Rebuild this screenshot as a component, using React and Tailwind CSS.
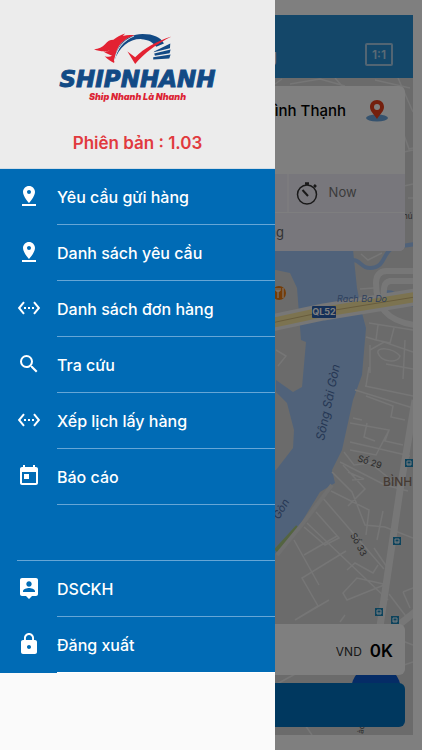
import { MdPinDrop, MdSettingsEthernet, MdSearch, MdLock } from 'react-icons/md';

const TodayIcon = ({ size }) => (
    <svg viewBox="0 0 24 24" width={size} height={size} fill="currentColor" aria-hidden="true">
        <path d="M19 3h-1V1h-2v2H8V1H6v2H5c-1.110 0-1.990.9-1.990 2L3 19c0 1.100.89 2 2 2h14c1.100 0 2-.9 2-2V5c0-1.100-.9-2-2-2zm0 16H5V8h14v11zM7 10h5v5H7z" />
    </svg>
);

const ContactPinIcon = ({ size }) => (
    <svg viewBox="0 0 24 24" width={size} height={size} fill="currentColor" aria-hidden="true">
        <path d="M19 2H5c-1.100 0-2 .9-2 2v14c0 1.100.9 2 2 2h4l3 3 3-3h4c1.100 0 2-.9 2-2V4c0-1.100-.9-2-2-2zm-7 3.300c1.490 0 2.700 1.210 2.700 2.700s-1.210 2.700-2.700 2.700-2.700-1.210-2.700-2.700 1.210-2.700 2.700-2.700zM18 16H6v-.9c0-2 4-3.100 6-3.100s6 1.100 6 3.100v.9z" />
    </svg>
);

const MENU = [
    { label: 'Yêu cầu gửi hàng', icon: MdPinDrop },
    { label: 'Danh sách yêu cầu', icon: MdPinDrop },
    { label: 'Danh sách đơn hàng', icon: MdSettingsEthernet },
    { label: 'Tra cứu', icon: MdSearch },
    { label: 'Xếp lịch lấy hàng', icon: MdSettingsEthernet },
    { label: 'Báo cáo', icon: TodayIcon },
];

const ACCOUNT = [
    { label: 'DSCKH', icon: ContactPinIcon },
    { label: 'Đăng xuất', icon: MdLock },
];

const STOPS = [[409, 463], [397, 541], [379, 612], [395, 620]];

const Logo = () => (
    <div className="flex flex-col items-center">
        <svg viewBox="155 35 275 98" className="mb-0.5 h-[33px] w-[92px]" aria-hidden="true">
            <path d="M221 122C226 84 250 41 306 41C340 41 360 51 370 69L347 79C337 64 322 57 303 56C266 55 238 78 221 122Z" fill="#124a85" />
            <path d="M161 86C175 85 186 80 194 71C202 62 208 58 219 58C228 50 240 43 254 39L247 47C259 43 271 43 282 45C262 50 245 62 235 78C226 93 224 108 221 127C212 123 202 116 193 107C202 110 209 109 215 106C205 102 197 98 189 93C196 94 203 93 208 90C192 95 176 92 161 86Z" fill="#e32232" />
            <path d="M222 121C228 87 246 61 280 47" fill="none" stroke="#ececec" strokeWidth="3" />
            <path d="M261 93L284 130C311 98 348 70 393 48C348 62 311 83 284 110Z" fill="#e32232" />
            <path d="M342 92L389 69L388 83L339 95ZM341 99L390 87L387 98L343 106ZM338 110L390 102L386 114L338 117Z" fill="#124a85" />
        </svg>
        <p className="font-['DejaVu_Sans'] text-[23px] leading-6 font-bold italic text-[#124a85] [-webkit-text-stroke:1px_#124a85]">SHIPNHANH</p>
        <p className="font-['Inter'] text-[9px] leading-3 font-black italic text-[#dc2434]">Ship Nhanh Là Nhanh</p>
    </div>
);

const MenuItem = ({ label, icon: Icon, last }) => (
    <li className="flex h-14">
        <button className="flex w-full items-stretch pl-[17px] text-left text-white">
            <span className="flex w-10 items-center pb-0.5">
                <Icon size={24} />
            </span>
            <span className={`flex flex-1 items-center border-b text-base font-medium ${last ? 'border-white' : 'border-[#66a6d6]'}`}>
                {label}
            </span>
        </button>
    </li>
);

const Drawer = () => (
    <nav className="absolute inset-y-0 left-0 z-20 w-[275px] overflow-hidden bg-[#fafafa]">
        <div className="flex h-[169px] flex-col items-center justify-between border-b border-[#d2dde6] bg-[#ececec] pt-8 pb-[13px]">
            <Logo />
            <p className="text-[17px] leading-6 font-semibold text-[#e13a3e]">Phiên bản : 1.03</p>
        </div>
        <div className="bg-[#006bb5]">
            <ul>
                {MENU.map((item) => <MenuItem key={item.label} {...item} />)}
            </ul>
            <div className="ml-[17px] h-14 border-b border-[#66a6d6]" />
            <ul>
                {ACCOUNT.map((item, i) => <MenuItem key={item.label} {...item} last={i === ACCOUNT.length - 1} />)}
            </ul>
        </div>
    </nav>
);

const CityMap = () => (
    <svg viewBox="9 78 404 657" preserveAspectRatio="xMaxYMin slice" className="absolute inset-0 h-full w-full" aria-hidden="true">
        <rect x="9" y="78" width="404" height="657" fill="#d6d6d6" />
        {/* river */}
        <path d="M240 240H352L357 288L362 313L366 328L362 375L353 400L342 450L332 470L335 483L320 492L298 528L276 553L240 590V480L276 470L293 448L294 430L287 403L276 392V380L293 392L302 387L306 342L301 340L297 288L290 273L276 270H240Z" fill="#a0c5f4" />
        <path d="M352 260C360 259 361 268 370 268C386 268 383 251 393 248C401 245 406 246 415 244M384 293C398 289 402 305 415 305" fill="none" stroke="#a0c5f4" strokeWidth="4" />
        <path d="M276 551L298 527" stroke="#a9c981" strokeWidth="5" />
        {/* side streets */}
        <g fill="none" stroke="#ececec" strokeWidth="1.5">
            <path d="M275 84L282 79M290 84L320 79L345 86M335 78L343 87M375 80L410 88M398 78L413 112M404 135L409 149L413 148M404 152L413 150M404 186L413 184M408 198H413" />
            <path d="M361 254L368 260L382 253M360 289L374 288M276 350L286 356L278 366" />
            <path d="M369 323L413 330M378 325L376 340L366 337M394 328L390 343L376 340M370 350L384 342L413 352M378 353C376 347 392 347 400 356C398 364 381 362 378 353ZM370 373V345M405 340L403 379M386 364L413 369M365 386L413 396M369 367L366 386M355 390L413 408M366 396L393 406L391 417L405 420" />
            <path d="M353 418L362 420M350 423L389 430L376 455L350 450M367 423L364 437L375 441M389 430L385 441L403 445M350 442L410 456M344 452L354 465L370 463L394 482M340 462L385 485L408 491" />
            <path d="M332 472L352 492L365 525L385 527L413 538M343 465L365 489L348 506M348 472L364 479L352 480M331 491L369 510L366 535M322 497L384 569M316 512L339 538L325 545L304 527M307 523L388 600M294 540L319 585M304 555L337 536M346 551L302 578L318 606L295 620M383 511L377 540M374 548L389 570M347 570L355 563L373 573L378 565M343 593L357 578L388 585M357 578L343 593L347 600L389 583M389 594L408 619M403 592L413 588M403 592L410 608M295 620L329 600" />
            <path d="M275 685L310 666M305 725L312 735M340 622L345 615M400 640L413 645M404 665L413 662" />
        </g>
        <path d="M277 555L304 522L332 485" fill="none" stroke="#e0e0e0" strokeWidth="4" />
        {/* main roads */}
        <path d="M415 400L400 490L378 640M380 640L415 612" fill="none" stroke="#efefef" strokeWidth="7" />
        <path d="M415 271H387C379 271 376 276 376 283C376 306 386 321 415 325M415 281H390C384 282 383 287 384 304" fill="none" stroke="#efefef" strokeWidth="6" />
        <path d="M240 331L276 322L323 312L415 297" fill="none" stroke="#eeeeee" strokeWidth="17" />
        <path d="M240 331L276 322L323 312L415 297" fill="none" stroke="#f8e7a0" strokeWidth="10" />
        <path d="M240 331L276 322L323 312L415 297" fill="none" stroke="#d0b878" strokeWidth="1" />
        <rect x="312" y="306" width="24" height="12" rx="1" fill="#2a60b0" />
        <g className="font-['Inter']" fill="#555555">
            <text x="324" y="315" textAnchor="middle" fontSize="9" fontWeight="700" fill="#ffffff">QL52</text>
            <text x="337" y="302" fontSize="9" fontStyle="italic" fill="#5f82bc">Rach Ba Do</text>
            <text transform="translate(324 441) rotate(-78)" fontSize="12" fontStyle="italic" fill="#4d70aa">Sông Sài Gòn</text>
            <text transform="translate(279 520) rotate(-60)" fontSize="11" fontStyle="italic" fill="#4d70aa">Gòn</text>
            <text transform="translate(357 461) rotate(18)" fontSize="9">Số 29</text>
            <text transform="translate(350 535) rotate(62)" fontSize="9">Số 33</text>
            <text x="403" y="219" fontSize="8">hú</text>
            <text transform="translate(363 734) rotate(-80)" fontSize="8">ào</text>
            <text x="383" y="486" fontSize="12" fontWeight="500" fill="#8b7566">BÌNH</text>
        </g>
        <circle cx="279" cy="293" r="7" fill="#e9790f" />
        <path d="M276 288V291M278 288V298M280 288V291M276 291H280M283 288V298" stroke="#ffffff" strokeWidth="1" fill="none" />
        {STOPS.map(([x, y]) => (
            <g key={`${x}-${y}`}>
                <rect x={x - 4} y={y - 4} width="8" height="8" fill="#1a86b8" />
                <path d={`M${x - 2} ${y - 2}h4v4h-4zM${x - 2} ${y + 1}h4`} stroke="#e6f4fb" fill="none" />
            </g>
        ))}
        <circle cx="376" cy="690" r="25" fill="#0a59cc" />
    </svg>
);

const PlacePin = () => (
    <svg viewBox="0 0 24 24" className="h-6 w-6" aria-hidden="true">
        <ellipse cx="12" cy="19" rx="11" ry="3.5" fill="#6aa5dc" />
        <path d="M12 1C7.800 1 5 4 5 8C5 12.500 9 15 12 20C15 15 19 12.500 19 8C19 4 16.200 1 12 1Z" fill="#e8401c" />
        <circle cx="12" cy="8" r="3" fill="#ffffff" />
    </svg>
);

const Stopwatch = () => (
    <svg viewBox="0 0 24 24" className="h-6 w-6" aria-hidden="true" fill="none" stroke="#333333">
        <circle cx="12" cy="13.500" r="9.500" strokeWidth="1.500" />
        <path d="M7.500 9L13 15" strokeWidth="2" />
        <path d="M10 2.500H14M12 3V4M19 4L21 6" strokeWidth="2.500" />
    </svg>
);

const OrderScreen = () => (
    <div className="mx-[9px] my-[15px] flex flex-1 flex-col">
        <header className="flex h-[63px] items-end bg-[#288fd2] px-5 pb-3 text-white">
            <h1 className="w-[248px] text-right text-[18px] leading-5 font-semibold">Đặt hàng</h1>
            <button className="ml-auto flex h-[23px] w-7 items-center justify-center rounded-xs border-2 border-[#a5cae6] text-xs font-semibold text-[#b5d5ec]">
                1:1
            </button>
        </header>
        <main className="relative flex flex-1 flex-col justify-between overflow-hidden p-2">
            <CityMap />
            <section className="relative overflow-hidden rounded-md bg-white">
                <div className="flex h-[88px] items-start justify-end gap-[19px] pt-[13px] pr-4">
                    <p className="text-[15px] leading-6 font-medium text-black">Bình Thạnh</p>
                    <PlacePin />
                </div>
                <div className="flex h-[39px] border-b border-[#fcfcff] bg-[#f0eef9]">
                    <div className="w-[70%] border-r-2 border-[#f8f7fd]" />
                    <button className="flex items-center gap-2.5 pl-1.5 text-[13px] text-[#777777]">
                        <Stopwatch />
                        Now
                    </button>
                </div>
                <p className="h-[38px] w-full bg-[#f0eef9] pr-[121px] text-right text-[13px] leading-[38px] text-[#666666]">Loại hàng</p>
            </section>
            <section className="relative flex flex-col gap-2">
                <div className="flex h-[51px] items-center justify-end gap-2 rounded-md bg-white pt-1 pr-3">
                    <span className="text-xs text-[#333333]">VND</span>
                    <strong className="text-[17px] font-semibold text-black">0K</strong>
                </div>
                <button className="h-11 rounded-md bg-[#0070be]" aria-label="Gửi" />
            </section>
        </main>
    </div>
);

export default function App() {
    return (
        <div className="relative flex min-h-screen flex-col overflow-hidden bg-white font-['Inter',sans-serif]">
            <OrderScreen />
            <div className="absolute inset-0 z-10 bg-black/50" />
            <Drawer />
        </div>
    );
}
